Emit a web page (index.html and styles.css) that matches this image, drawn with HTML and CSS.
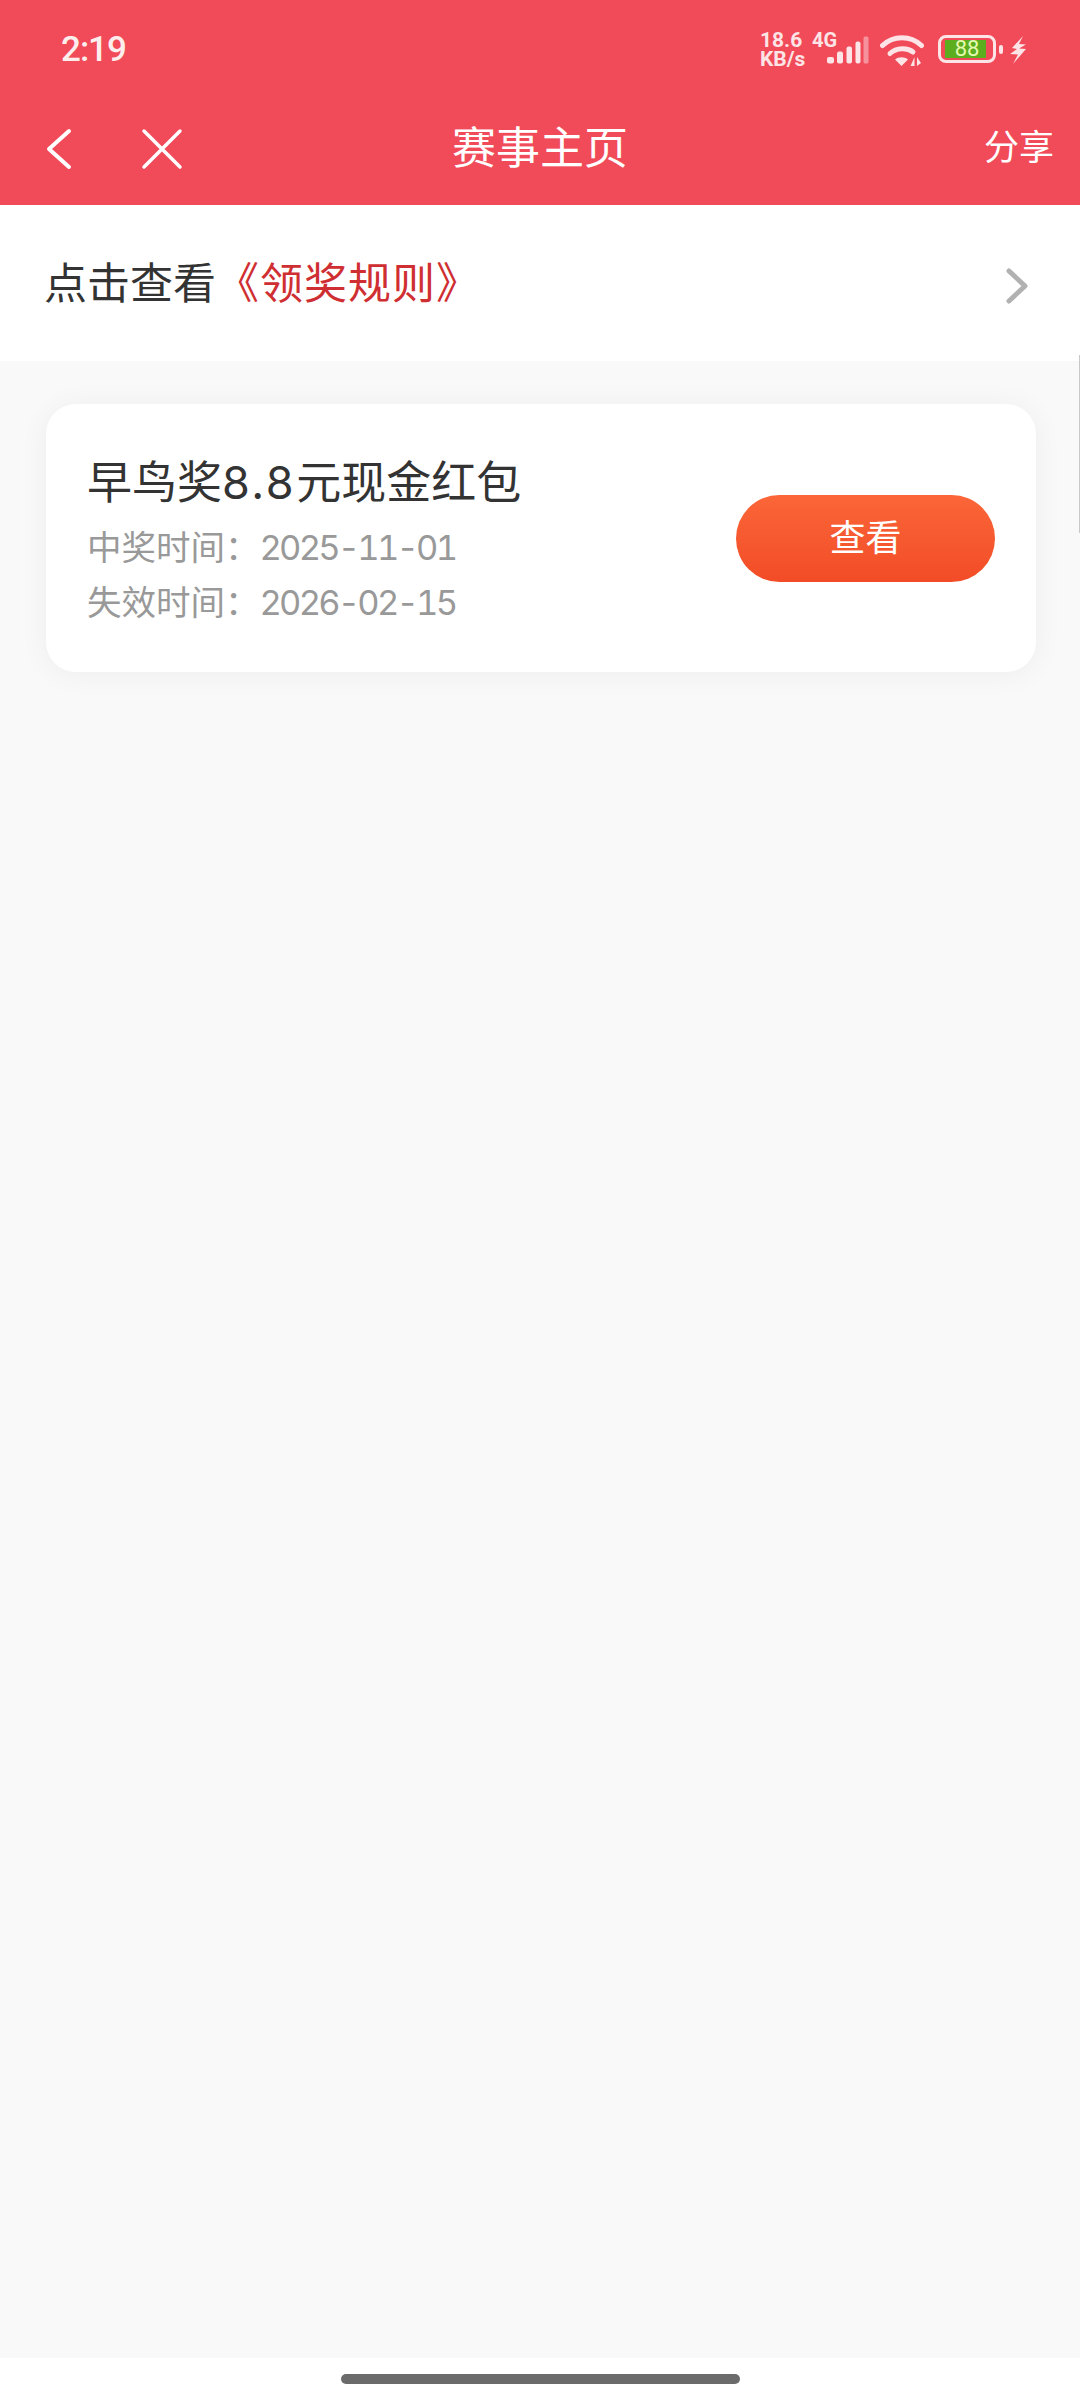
FILE: index.html
```html
<!doctype html>
<html lang="zh-CN">
<head>
	<meta charset="UTF-8">
	<title>赛事主页</title>
	<link rel="stylesheet" href="styles.css">
</head>
<body>
<div class="page">
	<header class="head">
		<div class="status">
			<span class="time">2:19</span>
			<div class="status-right">
				<span class="speed">18.6<br>KB/s</span>
				<div class="signal">
					<span class="net">4G</span>
					<svg class="bars" width="42" height="28" viewBox="0 0 42 28">
						<rect x="0" y="21" width="7" height="6.5" rx="2" fill="#fde4e6"/>
						<rect x="10" y="15.5" width="6" height="12" rx="2" fill="#fde4e6"/>
						<rect x="19.5" y="10.5" width="5.5" height="17" rx="2" fill="#fde4e6"/>
						<rect x="28.5" y="5.5" width="5" height="22" rx="2" fill="#fde4e6"/>
						<rect x="36.5" y="0.5" width="5" height="27" rx="1.5" fill="#fff" fill-opacity=".4"/>
					</svg>
				</div>
				<svg class="wifi" width="44" height="32" viewBox="0 0 44 32">
					<path d="M2.5 10.5C13 0 31 0 41.5 10.5" fill="none" stroke="#fde4e6" stroke-width="5" stroke-linecap="round"/>
					<path d="M10 18.5C16.5 12.5 27.5 12.5 33 17" fill="none" stroke="#fde4e6" stroke-width="5" stroke-linecap="round"/>
					<path d="M21.5 31L15 24.5C18.5 21.5 24.5 21.5 28 24.5Z" fill="#fde4e6"/>
					<path d="M34.5 22v9h-4zM37 22v9l4-3z" fill="#fde4e6"/>
				</svg>
				<div class="battery">
					<div class="batt-box"><span class="batt-fill">88</span></div>
					<span class="batt-tip"></span>
				</div>
				<svg class="bolt" width="16" height="28" viewBox="0 0 16 28">
					<path d="M13 0L2 12l5 1L0 18l8 .5L3 28l13-15-7-.5 7-4-7-.5z" fill="#fde4e6"/>
				</svg>
			</div>
		</div>
		<nav class="nav">
			<div class="nav-left">
				<svg width="28" height="42" viewBox="0 0 28 42">
					<path d="M23 3L3 21l20 18" fill="none" stroke="#fff" stroke-width="4" stroke-linecap="round" stroke-linejoin="round"/>
				</svg>
				<svg width="42" height="42" viewBox="0 0 42 42">
					<path d="M3 3l36 36M39 3L3 39" fill="none" stroke="#fff" stroke-width="3.5" stroke-linecap="round"/>
				</svg>
			</div>
			<span class="nav-title">赛事主页</span>
			<span class="nav-share">分享</span>
		</nav>
	</header>

	<div class="rule">
		<p class="rule-text">点击查看<em>《领奖规则》</em></p>
		<svg class="rule-arrow" width="24" height="36" viewBox="0 0 24 36">
			<path d="M3 3l16 15L3 33" fill="none" stroke="#b1b1b1" stroke-width="5" stroke-linecap="round" stroke-linejoin="round"/>
		</svg>
	</div>

	<main class="list">
		<div class="card">
			<div class="card-info">
				<h3 class="card-title">早鸟奖<span class="amount">8.8</span>元现金红包</h3>
				<p class="card-date">中奖时间：<span class="num">2025-11-01</span></p>
				<p class="card-date">失效时间：<span class="num">2026-02-15</span></p>
			</div>
			<button class="btn">查看</button>
		</div>
	</main>

	<footer class="home-bar"><span class="home-line"></span></footer>
	<span class="scroll-mark"></span>
</div>
</body>
</html>
```

FILE: styles.css
```css
*{
	margin:0;
	padding:0;
	box-sizing:border-box;
}
body{
	font-family:Inter,"Noto Sans CJK SC",sans-serif;
	color:#333;
	background:#f9f9f9;
}
.page{
	position:relative;
	width:1080px;
	height:2400px;
	display:flex;
	flex-direction:column;
	overflow:hidden;
}
.head{
	height:205px;
	background:#f14a59;
	color:#fff;
}
.status{
	height:92px;
	padding:24px 54px 0 61px;
	display:flex;
	justify-content:space-between;
}
.time{
	font-family:Roboto,sans-serif;
	font-size:35px;
	font-weight:500;
	letter-spacing:-1px;
	line-height:52px;
	color:#fdeeee;
}
.status-right{
	display:flex;
	align-items:flex-start;
	height:44px;
	margin-top:8px;
	color:#fde4e6;
}
.speed{
	font-family:Roboto,sans-serif;
	font-size:21px;
	font-weight:700;
	line-height:19px;
	width:52px;
	margin-top:-1px;
}
.signal{
	position:relative;
	width:56px;
	height:34px;
}
.net{
	position:absolute;
	left:0;
	top:-1px;
	font-family:Roboto,sans-serif;
	font-size:20px;
	font-weight:700;
	line-height:19px;
}
.bars{
	position:absolute;
	left:15px;
	top:4px;
}
.wifi{
	margin:3px 0 0 12px;
}
.battery{
	display:flex;
	align-items:center;
	height:28px;
	margin:3px 0 0 14px;
}
.batt-box{
	width:58px;
	height:28px;
	border:3px solid #fde4e6;
	border-radius:8px;
	padding:2px 7px 2px 4px;
}
.batt-fill{
	display:block;
	height:18px;
	padding-left:3px;
	background:#5cae1e;
	color:#e6f9b0;
	font-family:Roboto,sans-serif;
	font-size:22px;
	line-height:18px;
	text-align:center;
}
.batt-tip{
	width:4px;
	height:9px;
	margin-left:3px;
	border-radius:2px;
	background:#fde4e6;
}
.bolt{
	margin:4px 0 0 7px;
}
.nav{
	position:relative;
	height:113px;
	padding:0 26px 2px 46px;
	display:flex;
	align-items:center;
	justify-content:space-between;
}
.nav-left{
	display:flex;
	align-items:center;
	gap:67px;
	margin-top:2px;
}
.nav-title{
	position:absolute;
	left:0;
	right:0;
	text-align:center;
	font-size:44px;
	line-height:56px;
}
.nav-share{
	font-size:35px;
	line-height:48px;
	margin-bottom:2px;
}
.rule{
	height:156px;
	background:#fff;
	padding:0 50px 0 44px;
	display:flex;
	align-items:center;
	justify-content:space-between;
}
.rule-text{
	font-size:43px;
	line-height:56px;
	color:#333;
}
.rule-text em{
	font-style:normal;
	letter-spacing:1px;
	color:#cf2f32;
}
.rule-arrow{
	margin-top:5px;
}
.list{
	flex:1;
	padding:43px 44px 0 46px;
}
.card{
	height:268px;
	padding:0 41px 0 41px;
	background:#fff;
	border-radius:30px;
	box-shadow:0 2px 30px rgba(0,0,0,.05);
	display:flex;
	align-items:center;
	justify-content:space-between;
}
.card-info{
	margin-top:6px;
}
.card-title{
	font-size:45px;
	font-weight:400;
	line-height:60px;
	margin-bottom:7px;
	color:#333;
}
.amount{
	letter-spacing:2.5px;
}
.card-date{
	font-size:34.5px;
	line-height:55px;
	color:#999;
}
.num{
	font-variant-numeric:tabular-nums;
	letter-spacing:-2.8px;
}
.btn{
	width:259px;
	height:87px;
	border:0;
	border-radius:44px;
	padding-bottom:6px;
	background:linear-gradient(#fb6638,#f24c27);
	color:#fff;
	font-family:inherit;
	font-size:36px;
}
.home-bar{
	height:42px;
	background:#fff;
	display:flex;
	justify-content:center;
	padding-top:16px;
}
.home-line{
	width:399px;
	height:10px;
	border-radius:5px;
	background:#6b6b6b;
}
.scroll-mark{
	position:absolute;
	right:0;
	top:355px;
	width:1px;
	height:178px;
	background:#c8c8c8;
}
```
